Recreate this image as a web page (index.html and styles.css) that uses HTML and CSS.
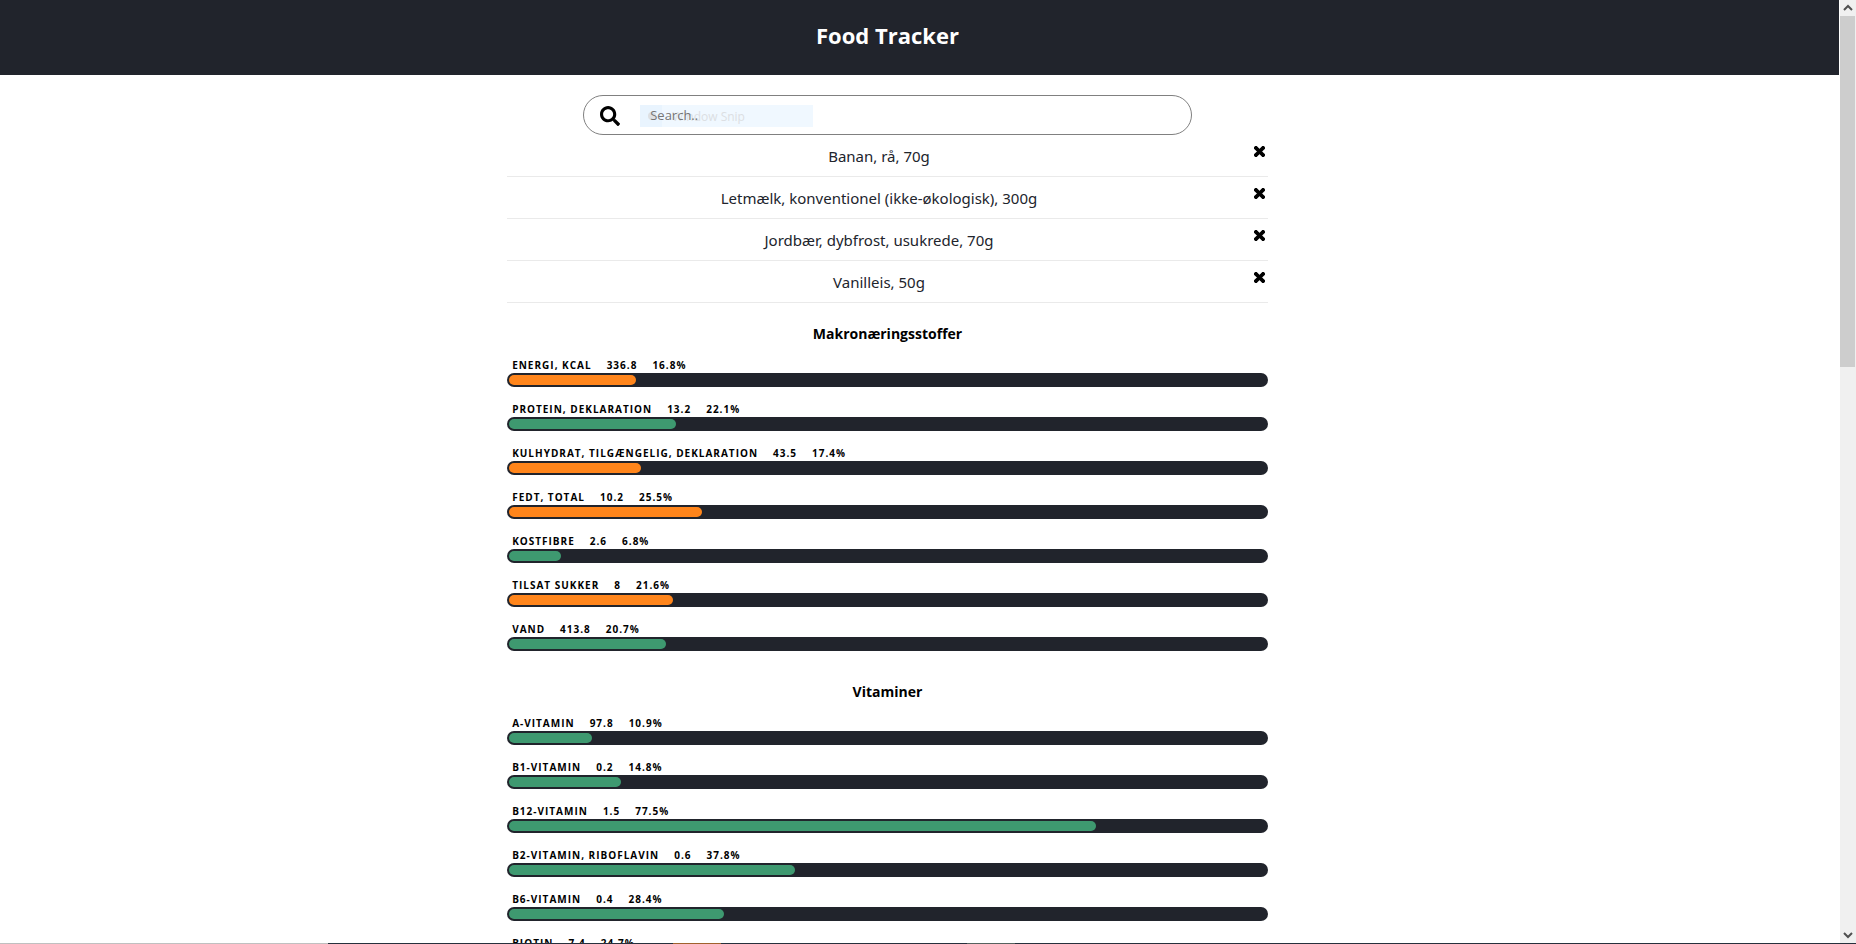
FILE: index.html
```html
<!DOCTYPE html>
<html lang="da">
<head>
<meta charset="utf-8">
<meta name="viewport" content="width=device-width, initial-scale=1">
<title>Food Tracker</title>
<link rel="stylesheet" href="styles.css">
</head>
<body>
<svg class="sprite" aria-hidden="true">
  <symbol id="times" viewBox="-12 -12 376 376"><path d="M243 176l100-100c12-12 12-32 0-44L321 9c-12-12-32-12-44 0L176 110 76 9C64-3 44-3 32 9L9 32c-12 12-12 32 0 44l101 100L9 277c-12 12-12 32 0 44l23 22c12 12 32 12 44 0l100-100 101 100c12 12 32 12 44 0l22-22c12-12 12-32 0-44z" stroke="#000" stroke-width="36"/></symbol>
</svg>
<div class="window">
  <div class="page">
    <header class="header"><h1 class="header-title">Food Tracker</h1></header>
    <main class="content">
      <div class="column">
        <form class="search">
          <svg class="search-icon" viewBox="0 0 512 512" aria-hidden="true"><path d="M505 442.700L405.300 343c-4.500-4.500-10.600-7-17-7H372c27.600-35.300 44-79.700 44-128C416 93.100 322.900 0 208 0S0 93.100 0 208s93.100 208 208 208c48.300 0 92.700-16.400 128-44v16.300c0 6.400 2.500 12.500 7 17l99.700 99.700c9.400 9.400 24.600 9.400 33.900 0l28.300-28.300c9.400-9.400 9.400-24.600.100-34zM208 336c-70.700 0-128-57.200-128-128 0-70.700 57.200-128 128-128 70.700 0 128 57.200 128 128 0 70.700-57.200 128-128 128z"/></svg>
          <div class="search-field">
            <input class="search-input" type="text" placeholder="Search.." aria-label="Search">
            <div class="ghost"><span class="ghost-icon"></span><span class="ghost-text">Window Snip</span></div>
          </div>
        </form>
        <ul class="foods">
          <li class="food"><span class="food-name">Banan, rå, 70g</span><button class="remove" type="button" aria-label="Fjern Banan"><svg class="remove-icon"><use href="#times"/></svg></button></li>
          <li class="food"><span class="food-name">Letmælk, konventionel (ikke-økologisk), 300g</span><button class="remove" type="button" aria-label="Fjern Letmælk"><svg class="remove-icon"><use href="#times"/></svg></button></li>
          <li class="food"><span class="food-name">Jordbær, dybfrost, usukrede, 70g</span><button class="remove" type="button" aria-label="Fjern Jordbær"><svg class="remove-icon"><use href="#times"/></svg></button></li>
          <li class="food"><span class="food-name">Vanilleis, 50g</span><button class="remove" type="button" aria-label="Fjern Vanilleis"><svg class="remove-icon"><use href="#times"/></svg></button></li>
        </ul>
        <section class="group">
          <h2 class="group-title">Makronæringsstoffer</h2>
          <div class="nutrient"><div class="label"><span>Energi, kcal</span><span>336.8</span><span>16.8%</span></div><div class="bar"><div class="fill warn" style="width:16.8%"></div></div></div>
          <div class="nutrient"><div class="label"><span>Protein, deklaration</span><span>13.2</span><span>22.1%</span></div><div class="bar"><div class="fill" style="width:22.1%"></div></div></div>
          <div class="nutrient"><div class="label"><span>Kulhydrat, tilgængelig, deklaration</span><span>43.5</span><span>17.4%</span></div><div class="bar"><div class="fill warn" style="width:17.4%"></div></div></div>
          <div class="nutrient"><div class="label"><span>Fedt, total</span><span>10.2</span><span>25.5%</span></div><div class="bar"><div class="fill warn" style="width:25.5%"></div></div></div>
          <div class="nutrient"><div class="label"><span>Kostfibre</span><span>2.6</span><span>6.8%</span></div><div class="bar"><div class="fill" style="width:6.8%"></div></div></div>
          <div class="nutrient"><div class="label"><span>Tilsat sukker</span><span>8</span><span>21.6%</span></div><div class="bar"><div class="fill warn" style="width:21.6%"></div></div></div>
          <div class="nutrient"><div class="label"><span>Vand</span><span>413.8</span><span>20.7%</span></div><div class="bar"><div class="fill" style="width:20.7%"></div></div></div>
        </section>
        <section class="group">
          <h2 class="group-title">Vitaminer</h2>
          <div class="nutrient"><div class="label"><span>A-vitamin</span><span>97.8</span><span>10.9%</span></div><div class="bar"><div class="fill" style="width:10.9%"></div></div></div>
          <div class="nutrient"><div class="label"><span>B1-vitamin</span><span>0.2</span><span>14.8%</span></div><div class="bar"><div class="fill" style="width:14.8%"></div></div></div>
          <div class="nutrient"><div class="label"><span>B12-vitamin</span><span>1.5</span><span>77.5%</span></div><div class="bar"><div class="fill" style="width:77.5%"></div></div></div>
          <div class="nutrient"><div class="label"><span>B2-vitamin, riboflavin</span><span>0.6</span><span>37.8%</span></div><div class="bar"><div class="fill" style="width:37.8%"></div></div></div>
          <div class="nutrient"><div class="label"><span>B6-vitamin</span><span>0.4</span><span>28.4%</span></div><div class="bar"><div class="fill" style="width:28.4%"></div></div></div>
          <div class="nutrient"><div class="label"><span>Biotin</span><span>7.4</span><span>24.7%</span></div><div class="bar"><div class="fill" style="width:24.7%"></div></div></div>
        </section>
      </div>
    </main>
  </div>
  <div class="scrollbar" aria-hidden="true">
    <svg class="arrow" viewBox="0 0 16 16"><path d="M4 10l4-4 4 4"/></svg>
    <div class="track"><div class="thumb"></div></div>
    <svg class="arrow" viewBox="0 0 16 16"><path d="M4 6l4 4 4-4"/></svg>
  </div>
</div>
<div class="edge"></div>
</body>
</html>
```

FILE: styles.css
```css
* { box-sizing: border-box; }
body {
  margin: 0;
  height: 100vh;
  display: flex;
  flex-direction: column;
  overflow: hidden;
  background: #fff;
  color: #000;
  font-family: "Open Sans", "Noto Sans", sans-serif;
}
.sprite { display: none; }
.window { flex: 1; min-height: 0; display: flex; gap: 1px; }
.page { flex: 1; min-width: 0; overflow: hidden; }
.header {
  padding: 19px 64px 24px 0;
  background: #21242c;
  color: #fff;
  text-align: center;
}
.header-title { margin: 0; font-size: 22px; line-height: 32px; font-weight: 700; }
.content {
  display: grid;
  grid-template-columns: 2fr 3fr 2fr;
  padding: 20px 64px 0 0;
}
.column { grid-column: 2; min-width: 0; }
.search {
  width: 80%;
  height: 40px;
  margin: 0 auto;
  padding: 2px 16px 0;
  display: flex;
  align-items: center;
  gap: 20px;
  border: 1px solid #808080;
  border-radius: 20px;
}
.search-icon { width: 20px; height: 20px; flex: none; }
.search-field { position: relative; flex: 1; height: 22px; }
.search-input {
  display: block;
  width: 100%;
  height: 20px;
  padding: 0 10px;
  border: 0;
  outline: 0;
  background: transparent;
  font: 13px/20px "Open Sans", "Noto Sans", sans-serif;
}
.search-input::placeholder { color: #757575; opacity: 1; }
.ghost {
  position: absolute;
  inset: 0 auto 0 0;
  z-index: -1;
  width: 173px;
  display: flex;
  align-items: center;
  background: linear-gradient(90deg, #e9f4fe 22px, #f0f8ff 22px);
}
.ghost-icon { width: 8px; height: 8px; margin: 0 16px 0 8px; border-radius: 50%; background: #dddfe2; }
.ghost-text { font-size: 12px; color: #dcdfe3; white-space: nowrap; }
.foods { margin: 0 0 2px; padding: 0; list-style: none; }
.food {
  height: 42px;
  display: flex;
  align-items: flex-start;
  border-bottom: 1px solid #eaeaea;
}
.food-name {
  flex: 1;
  padding-top: 9px;
  text-align: center;
  font-family: "Noto Sans", "Open Sans", sans-serif;
  font-size: 15px;
  line-height: 24px;
  color: #21242c;
}
.remove { padding: 11px 3px 0; border: 0; background: none; line-height: 0; cursor: pointer; }
.remove-icon { width: 11px; height: 11px; }
.group-title { margin: 0; padding: 17px 0 9px; text-align: center; font-size: 14px; line-height: 24px; font-weight: 700; }
.nutrient { padding-bottom: 12px; }
.label {
  display: flex;
  gap: 15px;
  padding: 2px 0 0 5px;
  font-size: 10px;
  line-height: 16px;
  font-weight: 700;
  letter-spacing: 1px;
  text-transform: uppercase;
}
.bar { height: 14px; padding: 2px; border-radius: 7px; background: #21242c; }
.fill { height: 10px; border-radius: 5px; background: #3e9970; }
.warn { background: #ff851b; }
.scrollbar { width: 16px; flex: none; display: flex; flex-direction: column; background: #f0f0f0; }
.arrow { width: 16px; height: 16px; fill: none; stroke: #505050; stroke-width: 2; }
.track { flex: 1; }
.thumb { width: 15px; height: 351px; background: #cdcdcd; }
.edge { height: 1px; flex: none; background: linear-gradient(90deg, #c0c0c0 328px, #26303c 328px 673px, #a0622d 673px 721px, #26303c 721px 967px, #56625f 967px 1015px, #26303c 1015px); }
```
